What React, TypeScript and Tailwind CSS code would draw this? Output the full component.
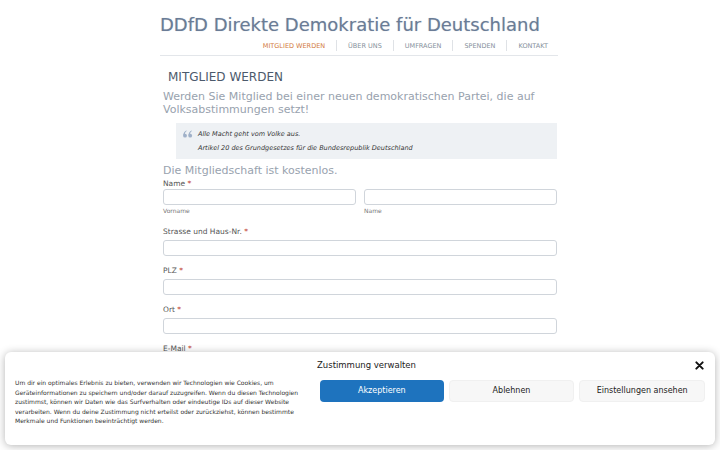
import React from 'react';

const navItems = ['Mitglied werden', 'Über uns', 'Umfragen', 'Spenden', 'Kontakt'];

const Req = () => <span className="text-[#c0392b]"> *</span>;

const Field: React.FC<{ label: string }> = ({ label }) => (
  <div className="mb-[9px]">
    <div className="text-[7.5px] leading-[12px] text-[#555] mb-[2px]">
      {label}
      <Req />
    </div>
    <div className="h-[16px] rounded-[3px] border border-[#d0d5db] bg-white" />
  </div>
);

const QuoteMark = () => (
  <svg width="10" height="8" viewBox="0 0 10 8" className="mt-[3px]">
    <g fill="#9fb0c8">
      <circle cx="2" cy="5.7" r="1.9" />
      <path d="M0.2 5.6 C0.2 3 1.4 1.2 3.4 0.4 L3.8 1.1 C2.6 1.8 2 2.8 1.9 4 Z" />
      <circle cx="7.2" cy="5.7" r="1.9" />
      <path d="M5.4 5.6 C5.4 3 6.6 1.2 8.6 0.4 L9 1.1 C7.8 1.8 7.2 2.8 7.1 4 Z" />
    </g>
  </svg>
);

export default function App() {
  return (
    <div className="relative w-[720px] h-[450px] overflow-hidden bg-white font-['DejaVu_Sans',sans-serif]">
      <div className="w-[398px] ml-[160px]">
        {/* Header */}
        <h1 className="pt-[14px] text-[18px] leading-[22px] whitespace-nowrap text-[#6a7c96] [text-shadow:0_0_1px_rgba(90,110,140,0.4)]">
          DDfD Direkte Demokratie für Deutschland
        </h1>
        <nav className="flex justify-end mt-[4px] pb-[4px] border-b border-[#e3e6ea]">
          {navItems.map((item, i) => (
            <div key={item} className="flex items-center">
              {i > 0 && <span className="w-px h-[11px] bg-[#dfe2e6]" />}
              <span
                className={`px-[11px] text-[6.5px] leading-[10px] uppercase ${
                  i === 0 ? 'text-[#d27a3c]' : 'text-[#858f9b]'
                } ${i === navItems.length - 1 ? 'pr-[10px]' : ''}`}
              >
                {item}
              </span>
            </div>
          ))}
        </nav>

        {/* Content */}
        <div className="pl-[3px] pr-[1px]">
          <h2 className="mt-[14px] ml-[5px] text-[12px] leading-[15px] text-[#4c5a6c]">MITGLIED WERDEN</h2>
          <p className="mt-[5px] text-[11px] leading-[13px] text-[#98a2ae]">
            Werden Sie Mitglied bei einer neuen demokratischen Partei, die auf Volksabstimmungen setzt!
          </p>
          <div className="mt-[7px] ml-[13px] flex bg-[#eef1f4] pl-[7px] py-[4px]">
            <div className="w-[15px] shrink-0">
              <QuoteMark />
            </div>
            <div className="text-[6.5px] leading-[14px] italic text-[#333]">
              <div>Alle Macht geht vom Volke aus.</div>
              <div>Artikel 20 des Grundgesetzes für die Bundesrepublik Deutschland</div>
            </div>
          </div>
          <p className="mt-[5px] text-[11px] leading-[14px] text-[#98a2ae]">Die Mitgliedschaft ist kostenlos.</p>

          <div className="text-[7.5px] leading-[11px] text-[#555]">
            Name<Req />
          </div>
          <div className="flex gap-[8px] mb-[10px]">
            <div className="flex-1">
              <div className="h-[16px] rounded-[3px] border border-[#d0d5db]" />
              <div className="text-[6px] leading-[10px] text-[#777] mt-[1px]">Vorname</div>
            </div>
            <div className="flex-1">
              <div className="h-[16px] rounded-[3px] border border-[#d0d5db]" />
              <div className="text-[6px] leading-[10px] text-[#777] mt-[1px]">Name</div>
            </div>
          </div>
          <Field label="Strasse und Haus-Nr." />
          <Field label="PLZ" />
          <Field label="Ort" />
          <Field label="E-Mail" />
        </div>
      </div>

      {/* Cookie banner */}
      <div className="absolute left-[5px] top-[352px] w-[710px] h-[93px] rounded-[6px] bg-white shadow-[0_1px_8px_rgba(0,0,0,0.3)] flex">
        <p className="w-[292px] shrink-0 ml-[10px] mt-[26px] text-[6px] leading-[9.5px] text-[#333]">
          Um dir ein optimales Erlebnis zu bieten, verwenden wir Technologien wie Cookies, um Geräteinformationen zu speichern und/oder darauf zuzugreifen. Wenn du diesen Technologien zustimmst, können wir Daten wie das Surfverhalten oder eindeutige IDs auf dieser Website verarbeiten. Wenn du deine Zustimmung nicht erteilst oder zurückziehst, können bestimmte Merkmale und Funktionen beeinträchtigt werden.
        </p>
        <div className="ml-[10px] flex-1 pr-[10px]">
          <div className="flex items-center justify-between mt-[7px]">
            <span className="text-[8.5px] leading-[12px] text-[#222]">Zustimmung verwalten</span>
            <svg width="9" height="9" viewBox="0 0 10 10" className="mr-[1px]">
              <path d="M1.5 1.5 L8.5 8.5 M8.5 1.5 L1.5 8.5" stroke="#111" strokeWidth="2.2" strokeLinecap="round" />
            </svg>
          </div>
          <div className="flex gap-[5px] mt-[9px] pl-[3px]">
            <button className="flex-1 h-[22px] rounded-[4px] bg-[#1e73be] text-white text-[8px]">Akzeptieren</button>
            <button className="flex-1 h-[22px] rounded-[4px] bg-[#f7f7f7] border border-[#f0f0f0] text-[#222] text-[8px]">Ablehnen</button>
            <button className="flex-1 h-[22px] rounded-[4px] bg-[#f7f7f7] border border-[#f0f0f0] text-[#222] text-[8px]">Einstellungen ansehen</button>
          </div>
        </div>
      </div>
    </div>
  );
}
